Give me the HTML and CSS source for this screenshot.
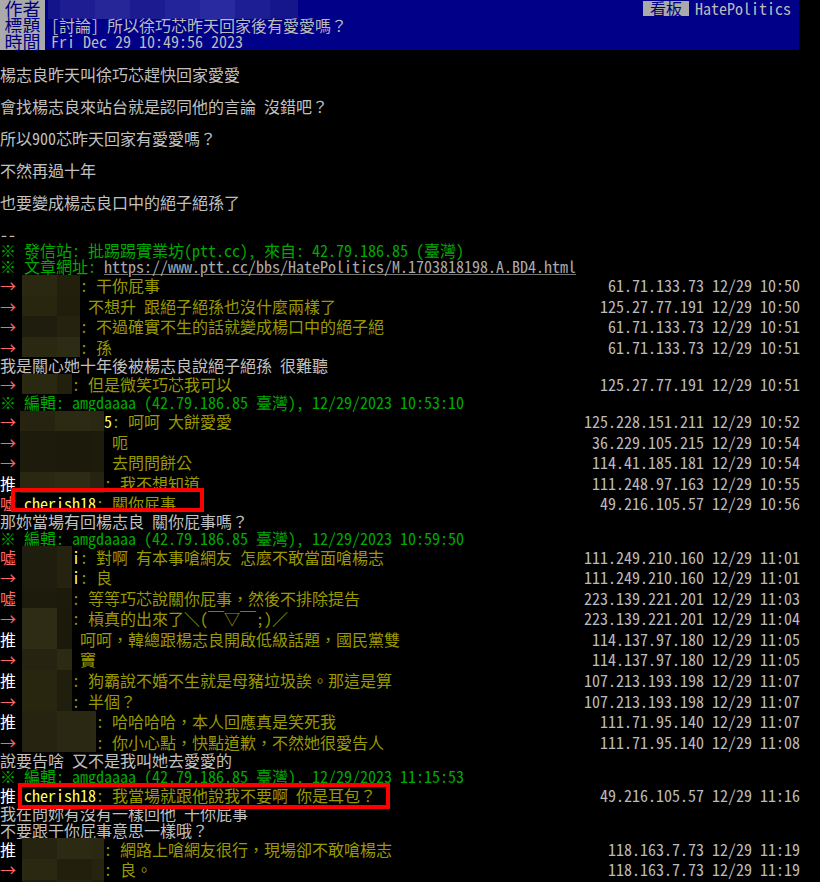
FILE: index.html
```html
<!DOCTYPE html>
<html lang="zh-Hant">
<head>
<meta charset="utf-8">
<title>[討論] 所以徐巧芯昨天回家後有愛愛嗎？</title>
<link rel="stylesheet" href="styles.css">
</head>
<body>
<div class="page">
  <header class="meta">
    <div class="meta-row">
      <span class="meta-tag">作者</span>
      <span class="meta-blur"></span>
      <span class="board"><span class="board-tag">看板</span><span class="meta-val">HatePolitics</span></span>
    </div>
    <div class="meta-row">
      <span class="meta-tag">標題</span>
      <span class="meta-val">[討論] 所以徐巧芯昨天回家後有愛愛嗎？</span>
    </div>
    <div class="meta-row">
      <span class="meta-tag">時間</span>
      <span class="meta-val">Fri Dec 29 10:49:56 2023</span>
    </div>
  </header>

  <main class="content">
    <div class="ln"></div>
    <div class="ln">楊志良昨天叫徐巧芯趕快回家愛愛</div>
    <div class="ln"></div>
    <div class="ln">會找楊志良來站台就是認同他的言論 沒錯吧？</div>
    <div class="ln"></div>
    <div class="ln">所以900芯昨天回家有愛愛嗎？</div>
    <div class="ln"></div>
    <div class="ln">不然再過十年</div>
    <div class="ln"></div>
    <div class="ln">也要變成楊志良口中的絕子絕孫了</div>
    <div class="ln"></div>
    <div class="ln">--</div>
    <div class="ln2 g">※ 發信站: 批踢踢實業坊(ptt.cc), 來自: 42.79.186.85 (臺灣)</div>
    <div class="ln2 g">※ 文章網址: <a class="url" href="#">https://www.ptt.cc/bbs/HatePolitics/M.1703818198.A.BD4.html</a></div>

    <div class="push"><span class="tag t-arrow">→</span><span class="blur w58 k1"></span><span class="pc">: 干你屁事</span><span class="ip">61.71.133.73 12/29 10:50</span></div>
    <div class="push"><span class="tag t-arrow">→</span><span class="blur w58 k2"></span><span class="pc gap8">不想升 跟絕子絕孫也沒什麼兩樣了</span><span class="ip">125.27.77.191 12/29 10:50</span></div>
    <div class="push"><span class="tag t-arrow">→</span><span class="blur w58 k3"></span><span class="pc">: 不過確實不生的話就變成楊口中的絕子絕</span><span class="ip">61.71.133.73 12/29 10:51</span></div>
    <div class="push"><span class="tag t-arrow">→</span><span class="blur w58 k4"></span><span class="pc">: 孫</span><span class="ip">61.71.133.73 12/29 10:51</span></div>
    <div class="ln2">我是關心她十年後被楊志良說絕子絕孫 很難聽</div>
    <div class="push"><span class="tag t-arrow">→</span><span class="blur w50 k1"></span><span class="pc">: 但是微笑巧芯我可以</span><span class="ip">125.27.77.191 12/29 10:51</span></div>
    <div class="ln2 g">※ 編輯: amgdaaaa (42.79.186.85 臺灣), 12/29/2023 10:53:10</div>

    <div class="push"><span class="tag t-arrow">→</span><span class="blur w84 k6"></span><span class="uid">5</span><span class="pc">: 呵呵 大餅愛愛</span><span class="ip">125.228.151.211 12/29 10:52</span></div>
    <div class="push"><span class="tag t-arrow">→</span><span class="blur w84 k5"></span><span class="pc gap8">呃</span><span class="ip">36.229.105.215 12/29 10:54</span></div>
    <div class="push"><span class="tag t-arrow">→</span><span class="blur w84 k5"></span><span class="pc gap8">去問問餅公</span><span class="ip">114.41.185.181 12/29 10:54</span></div>
    <div class="push"><span class="tag t-push">推</span><span class="blur w84 k4"></span><span class="pc">: 我不想知道</span><span class="ip">111.248.97.163 12/29 10:55</span></div>
    <div class="push"><span class="tag t-boo">噓</span><span class="uid gap8">cherish18</span><span class="pc">: 關你屁事</span><span class="ip">49.216.105.57 12/29 10:56</span><span class="mark m1"></span></div>
    <div class="ln2">那妳當場有回楊志良 關你屁事嗎？</div>
    <div class="ln2 g">※ 編輯: amgdaaaa (42.79.186.85 臺灣), 12/29/2023 10:59:50</div>

    <div class="push"><span class="tag t-boo">噓</span><span class="blur w50 k3"></span><span class="uid">i</span><span class="pc">: 對啊 有本事嗆網友 怎麼不敢當面嗆楊志</span><span class="ip">111.249.210.160 12/29 11:01</span></div>
    <div class="push"><span class="tag t-arrow">→</span><span class="blur w50 k3"></span><span class="uid">i</span><span class="pc">: 良</span><span class="ip">111.249.210.160 12/29 11:01</span></div>
    <div class="push"><span class="tag t-boo">噓</span><span class="blur w50 k5"></span><span class="pc">: 等等巧芯說關你屁事，然後不排除提告</span><span class="ip">223.139.221.201 12/29 11:03</span></div>
    <div class="push"><span class="tag t-arrow">→</span><span class="blur w50 k7"></span><span class="pc">: 槓真的出來了＼(￣▽￣;)／</span><span class="ip">223.139.221.201 12/29 11:04</span></div>
    <div class="push"><span class="tag t-push">推</span><span class="blur w50 k7"></span><span class="pc gap8">呵呵，韓總跟楊志良開啟低級話題，國民黨雙</span><span class="ip">114.137.97.180 12/29 11:05</span></div>
    <div class="push"><span class="tag t-arrow">→</span><span class="blur w50 k6"></span><span class="pc gap8">竇</span><span class="ip">114.137.97.180 12/29 11:05</span></div>
    <div class="push"><span class="tag t-push">推</span><span class="blur w50 k2"></span><span class="pc">: 狗霸說不婚不生就是母豬垃圾誒。那這是算</span><span class="ip">107.213.193.198 12/29 11:07</span></div>
    <div class="push"><span class="tag t-arrow">→</span><span class="blur w50 k2"></span><span class="pc">: 半個？</span><span class="ip">107.213.193.198 12/29 11:07</span></div>
    <div class="push"><span class="tag t-push">推</span><span class="blur w74 k8"></span><span class="pc">: 哈哈哈哈，本人回應真是笑死我</span><span class="ip">111.71.95.140 12/29 11:07</span></div>
    <div class="push"><span class="tag t-arrow">→</span><span class="blur w74 k8"></span><span class="pc">: 你小心點，快點道歉，不然她很愛告人</span><span class="ip">111.71.95.140 12/29 11:08</span></div>
    <div class="ln2">說要告啥 又不是我叫她去愛愛的</div>
    <div class="ln2 g">※ 編輯: amgdaaaa (42.79.186.85 臺灣), 12/29/2023 11:15:53</div>

    <div class="push"><span class="tag t-push">推</span><span class="uid gap8">cherish18</span><span class="pc">: 我當場就跟他說我不要啊 你是耳包？</span><span class="ip">49.216.105.57 12/29 11:16</span><span class="mark m2"></span></div>
    <div class="ln2">我在問妳有沒有一樣回他 干你屁事</div>
    <div class="ln2">不要跟干你屁事意思一樣哦？</div>
    <div class="push"><span class="tag t-push">推</span><span class="blur w82 k6"></span><span class="pc">: 網路上嗆網友很行，現場卻不敢嗆楊志</span><span class="ip">118.163.7.73 12/29 11:19</span></div>
    <div class="push"><span class="tag t-arrow">→</span><span class="blur w82 k1"></span><span class="pc">: 良。</span><span class="ip">118.163.7.73 12/29 11:19</span></div>
    <div class="push"><span class="tag t-push">推</span><span class="blur w82 k3"></span><span class="pc">: 楊志良講的話根本不是人話</span><span class="ip">118.163.7.73 12/29 11:20</span></div>
  </main>
</div>
</body>
</html>
```

FILE: styles.css
```css
html, body {
  margin: 0;
  padding: 0;
  background: #000;
}

body {
  font-family: "Noto Sans Mono CJK TC", "Liberation Mono", "Noto Sans CJK TC", monospace;
  font-size: 16px;
  color: #c0c0c0;
  overflow: hidden;
}

.page {
  width: 800px;
}

/* ---------- article header ---------- */
.meta {
  width: 799px;
  background: #000088;
}

.meta-row {
  display: flex;
  align-items: center;
  height: 16.67px;
  line-height: 16.67px;
}

.meta-tag {
  flex: none;
  align-self: stretch;
  width: 45px;
  background: #aaaaaa;
  color: #000080;
  font-size: 18px;
  text-align: center;
}

.meta-val {
  margin-left: 6px;
  color: #bbbbbb;
  white-space: pre;
}

.meta-blur {
  flex: none;
  align-self: flex-start;
  margin-left: 3px;
  width: 250px;
  height: 19px;
  background: linear-gradient(to right,
    #14148a 0 12px, #1e1e92 12px 47px, #262698 47px 82px, #1c1c90 82px 117px,
    #24249a 117px 152px, #2a2aa0 152px 187px, #1e1e94 187px 222px, #16168c 222px);
}

.board {
  display: flex;
  align-items: center;
  margin-left: auto;
  margin-right: 8px;
}

.board-tag {
  background: #aaaaaa;
  color: #000080;
  padding: 0 7px;
  height: 15px;
  line-height: 15px;
}

/* ---------- body ---------- */
.content {
  width: 800px;
}

.ln {
  height: 16px;
  line-height: 16px;
  white-space: pre;
}

.ln2 {
  height: 16.5px;
  line-height: 16.5px;
  white-space: pre;
}

.g {
  color: #00aa00;
}

.url {
  color: #aaaaaa;
  text-decoration: underline;
  text-decoration-color: #777777;
}

/* ---------- pushes ---------- */
.push {
  position: relative;
  display: flex;
  align-items: center;
  height: 20.55px;
  line-height: 20px;
  white-space: pre;
}

.tag {
  flex: none;
  width: 16px;
}

.t-push { color: #ffffff; }
.t-arrow,
.t-boo { color: #ff6666; }

.uid { color: #ffff66; }
.pc { color: #999900; }

.gap8 { margin-left: 8px; }

.ip {
  margin-left: auto;
  color: #bbbbbb;
}

.blur {
  flex: none;
  align-self: stretch;
  margin-left: 6px;
  background: linear-gradient(to right, var(--a) 0 35px, var(--b) 35px 70px, var(--c) 70px);
}

.w58 { width: 58px; }
.w50 { width: 50px; }
.w84 { width: 84px; margin-left: 4px; }
.w74 { width: 74px; }
.w82 { width: 82px; }

.k1 { --a: #2b2812; --b: #221f0d; --c: #262310; }
.k2 { --a: #29260f; --b: #201e0c; --c: #23200e; }
.k3 { --a: #1f1d0d; --b: #25220f; --c: #1f1d0c; }
.k4 { --a: #2b2812; --b: #2e2b15; --c: #262310; }
.k5 { --a: #1d1c0c; --b: #1b1a0b; --c: #1c1b0c; }
.k6 { --a: #262310; --b: #2d2a14; --c: #2a2712; }
.k7 { --a: #2e2c14; --b: #1a190a; --c: #262310; }
.k8 { --a: #262411; --b: #2a2712; --c: #2b2813; }

/* red annotation boxes drawn over the screenshot */
.mark {
  position: absolute;
  box-sizing: border-box;
  border: 4px solid #ff0000;
  pointer-events: none;
}

.m1 {
  left: 11px;
  top: -5px;
  width: 193px;
  height: 24px;
}

.m2 {
  left: 18px;
  top: -2px;
  width: 372px;
  height: 26px;
}
```
